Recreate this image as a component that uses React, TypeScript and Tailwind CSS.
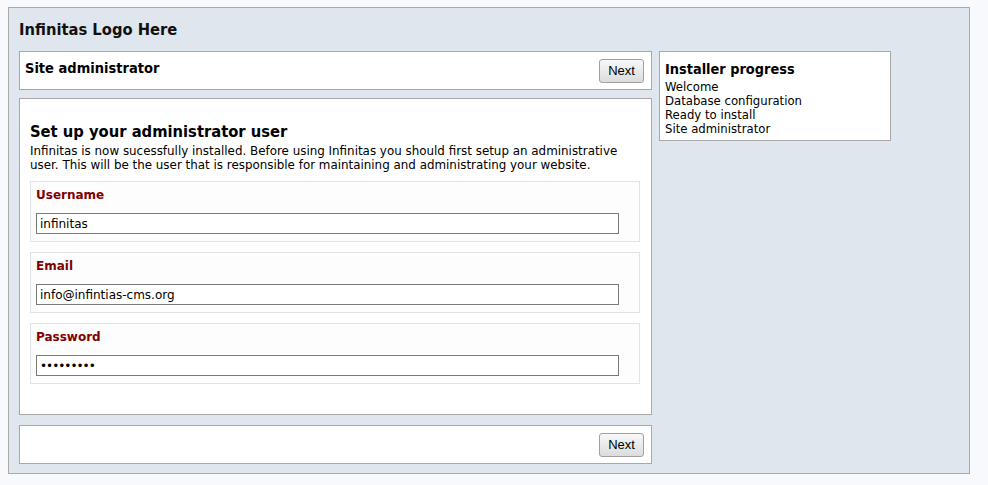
import React from "react";

function NextButton() {
  return (
    <button className="h-[24px] w-[45px] rounded-[3px] border border-[#a0a0a0] bg-gradient-to-b from-[#f8f8f8] to-[#dcdcdc] text-[13px] text-black [font-family:'Liberation_Sans',Arial,sans-serif]">
      Next
    </button>
  );
}

function Field({ label, value, type = "text" }: { label: string; value: string; type?: string }) {
  return (
    <div className="border border-[#e2e2e2] bg-[#fdfdfd] pl-[5px] pt-[5px] h-[61px]">
      <div className="h-[16px] text-[12px] font-bold leading-[16px] text-[#7f0000]">{label}</div>
      <input
        type={type}
        readOnly
        value={value}
        className={
          type === "password"
            ? "mt-[10px] h-[21px] w-[583px] border border-[#7a7a7a] bg-white px-[3px] text-[12px] tracking-[-1px] text-black outline-none [font-family:'DejaVu_Sans',Verdana,sans-serif]"
            : "mt-[10px] h-[21px] w-[583px] border border-[#7a7a7a] bg-white px-[3px] text-[12px] text-black outline-none [font-family:'DejaVu_Sans',Verdana,sans-serif]"
        }
      />
    </div>
  );
}

const cond = "[font-family:'DejaVu_Sans_Condensed','DejaVu_Sans',sans-serif]";

export default function App() {
  return (
    <div className="min-h-[485px] bg-[#f7f9fd] pt-[7px] pl-[8px] text-[12px] text-black [font-family:'DejaVu_Sans',Verdana,sans-serif]">
      <div className="h-[467px] w-[962px] border border-[#a9a9a9] bg-[#dfe6ee] px-[10px] pt-[10px]">
        <div className="h-[33px] text-[16.4px] font-bold leading-[24px] text-[#111] [font-family:'DejaVu_Sans_Condensed','DejaVu_Sans',sans-serif]">
          Infinitas Logo Here
        </div>
        <div className="flex gap-[7px] items-start">
          <div className="flex w-[633px] flex-col">
            <div className="flex h-[39px] items-center justify-between border border-[#a9a9a9] bg-white pl-[5px] pr-[7px]">
              <div className="text-[14.5px] font-bold leading-[18px] -mt-[5px] [font-family:'DejaVu_Sans_Condensed','DejaVu_Sans',sans-serif]">Site administrator</div>
              <NextButton />
            </div>
            <div className="mt-[8px] h-[317px] border border-[#a9a9a9] bg-white px-[10px] pt-[22px]">
              <div className="text-[16.4px] font-bold leading-[22px] [font-family:'DejaVu_Sans_Condensed','DejaVu_Sans',sans-serif]">
                Set up your administrator user
              </div>
              <p className="mt-[1px] text-[11.9px] leading-[14px]">
                Infinitas is now sucessfully installed. Before using Infinitas you should first setup an administrative user. This will be the user that is responsible for maintaining and administrating your website.
              </p>
              <div className="mt-[9px] flex w-[610px] flex-col gap-[10px]">
                <Field label="Username" value="infinitas" />
                <Field label="Email" value="info@infintias-cms.org" />
                <Field label="Password" value="infinitas" type="password" />
              </div>
            </div>
            <div className="mt-[10px] flex h-[39px] items-center justify-end border border-[#a9a9a9] bg-white pr-[7px]">
              <NextButton />
            </div>
          </div>
          <div className="w-[232px] h-[90px] border border-[#a9a9a9] bg-white px-[5px] pt-[6px]">
            <div className="text-[14.4px] font-bold leading-[22px] [font-family:'DejaVu_Sans_Condensed','DejaVu_Sans',sans-serif]">Installer progress</div>
            <div className="text-[11.7px] leading-[14px]">Welcome</div>
            <div className="text-[11.7px] leading-[14px]">Database configuration</div>
            <div className="text-[11.7px] leading-[14px]">Ready to install</div>
            <div className="text-[11.7px] leading-[14px]">Site administrator</div>
          </div>
        </div>
      </div>
    </div>
  );
}
